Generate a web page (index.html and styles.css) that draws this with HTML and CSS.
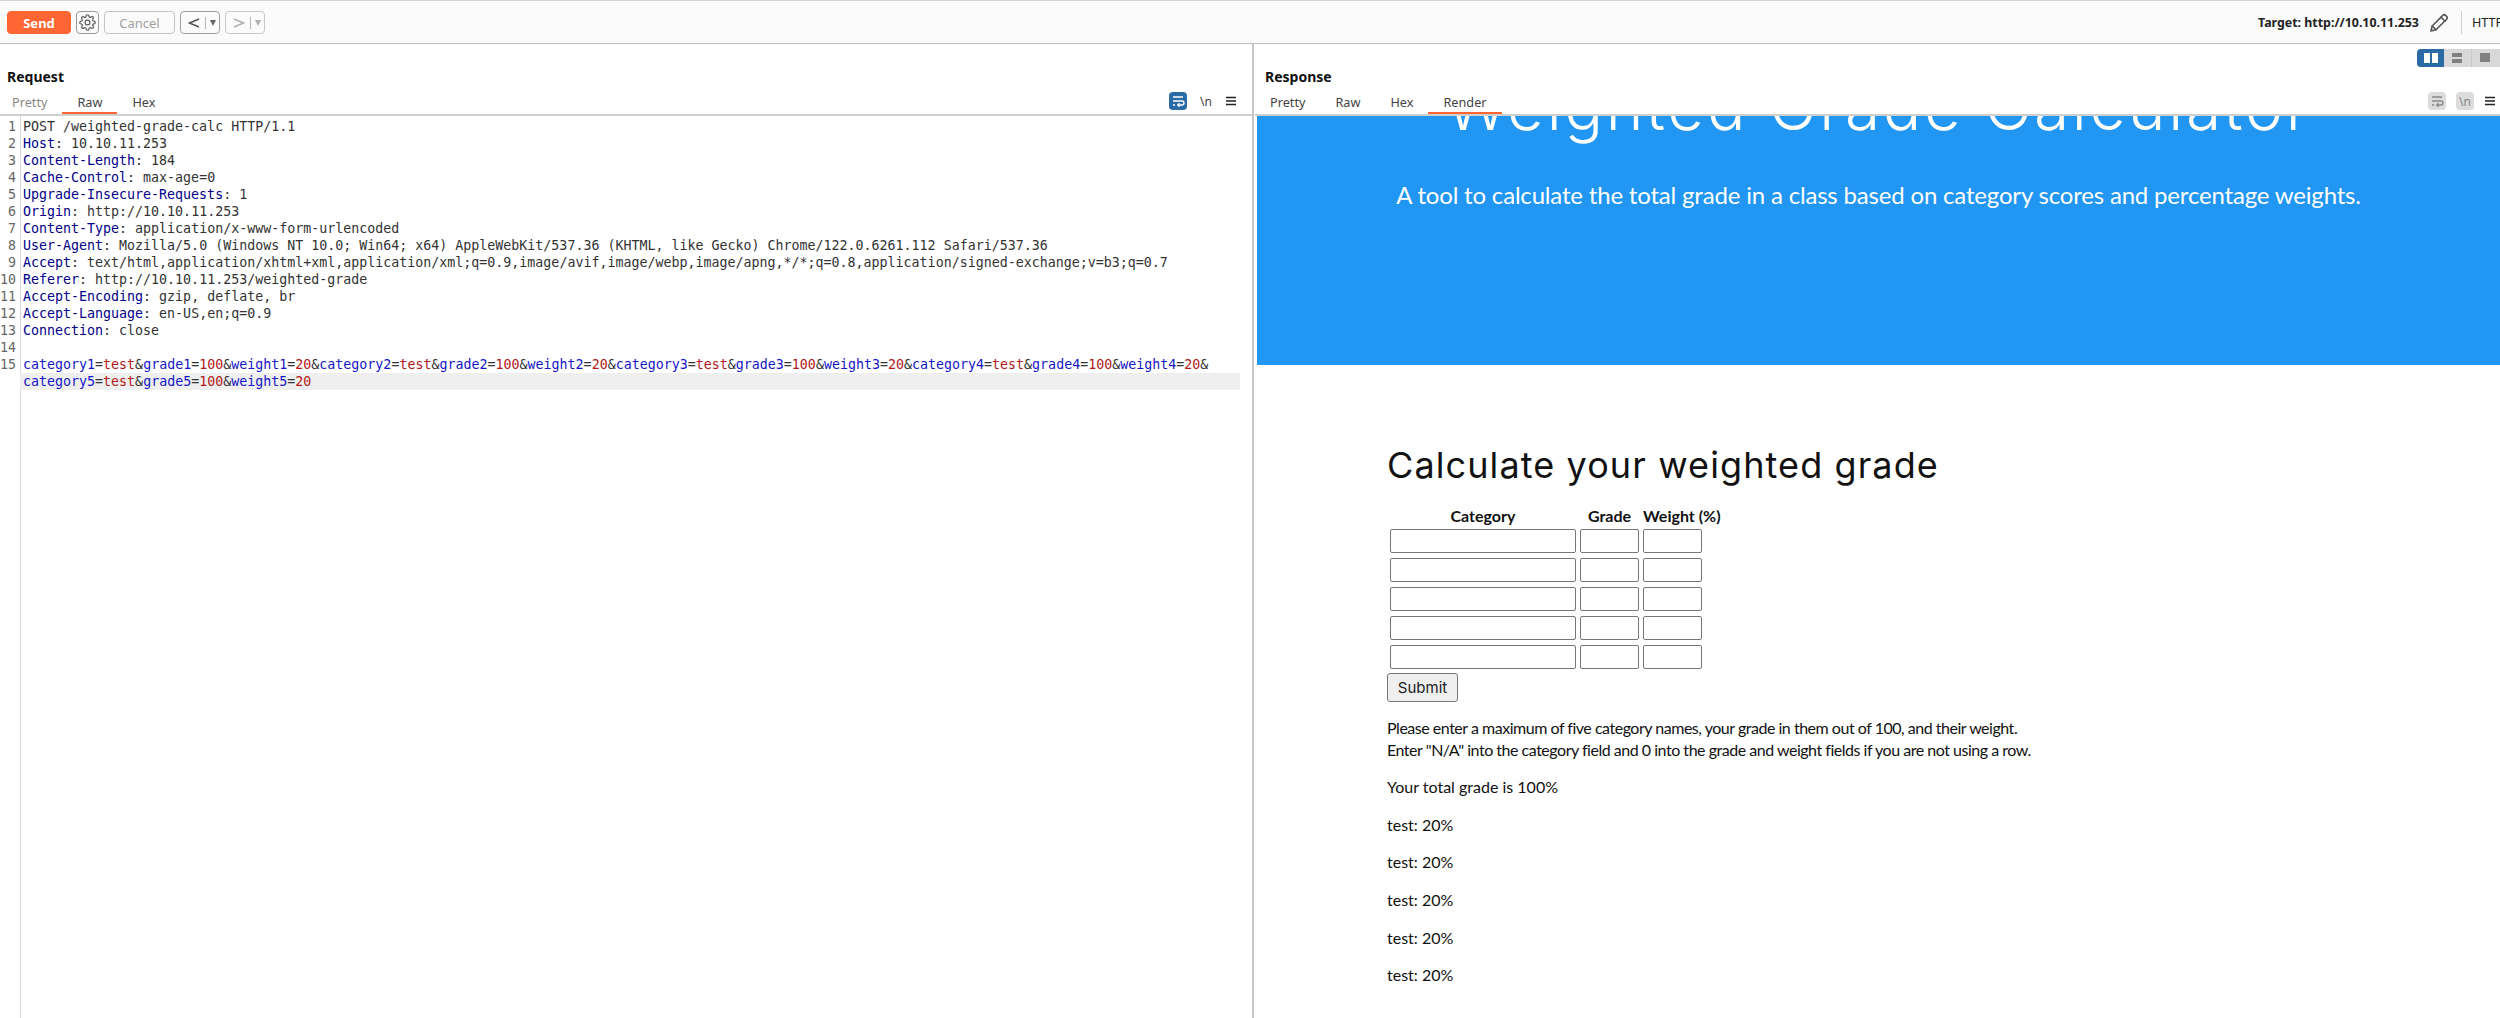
FILE: index.html
```html
<!DOCTYPE html>
<html lang="en">
<head>
<meta charset="utf-8">
<title>Repeater</title>
<link rel="stylesheet" href="styles.css">
</head>
<body>
<header class="toolbar">
  <button class="btn send">Send</button>
  <button class="btn gear"><svg viewBox="0 0 24 24" width="17" height="17" class="line"><circle cx="12" cy="12" r="3.4"/><path d="M19.4 15a1.65 1.65 0 0 0 .33 1.82l.06.06a2 2 0 0 1 0 2.83 2 2 0 0 1-2.83 0l-.06-.06a1.65 1.65 0 0 0-1.82-.33 1.65 1.65 0 0 0-1 1.51V21a2 2 0 0 1-2 2 2 2 0 0 1-2-2v-.09A1.65 1.65 0 0 0 9 19.4a1.65 1.65 0 0 0-1.82.33l-.06.06a2 2 0 0 1-2.83 0 2 2 0 0 1 0-2.83l.06-.06a1.65 1.65 0 0 0 .33-1.82 1.65 1.65 0 0 0-1.51-1H3a2 2 0 0 1-2-2 2 2 0 0 1 2-2h.09A1.65 1.65 0 0 0 4.6 9a1.65 1.65 0 0 0-.33-1.82l-.06-.06a2 2 0 0 1 0-2.83 2 2 0 0 1 2.83 0l.06.06a1.65 1.65 0 0 0 1.82.33H9a1.65 1.65 0 0 0 1-1.51V3a2 2 0 0 1 2-2 2 2 0 0 1 2 2v.09a1.65 1.65 0 0 0 1 1.51 1.65 1.65 0 0 0 1.82-.33l.06-.06a2 2 0 0 1 2.83 0 2 2 0 0 1 0 2.83l-.06.06a1.65 1.65 0 0 0-.33 1.82V9a1.65 1.65 0 0 0 1.51 1H21a2 2 0 0 1 2 2 2 2 0 0 1-2 2h-.09a1.65 1.65 0 0 0-1.51 1z"/></svg></button>
  <button class="btn cancel">Cancel</button>
  <div class="btn nav"><svg viewBox="0 0 12 12" width="12" height="12" class="chev"><path d="M11 2 1.5 6 11 10"/></svg><i class="sep"></i><i class="tri"></i></div>
  <div class="btn nav off"><svg viewBox="0 0 12 12" width="12" height="12" class="chev"><path d="M1 2 10.5 6 1 10"/></svg><i class="sep"></i><i class="tri"></i></div>
  <div class="target">
    <b>Target: http://10.10.11.253</b>
    <svg viewBox="0 0 20 20" width="20" height="20" class="line pencil"><path d="M2 18l1.2-5L13.8 2.4a2 2 0 0 1 2.8 0l1 1a2 2 0 0 1 0 2.8L7 16.8z"/><path d="M12 4.2l4 4M3.2 13l3.8 3.8"/></svg>
    <i class="vsep"></i>
    <span class="proto">HTTP</span>
  </div>
</header>

<main class="panes">
  <section class="pane left">
    <h2 class="title">Request</h2>
    <div class="tabs">
      <span class="tab first dim">Pretty</span>
      <span class="tab on">Raw</span>
      <span class="tab">Hex</span>
      <div class="tools">
        <span class="tool active"><svg viewBox="0 0 18 18" width="18" height="18" class="wrap"><path d="M4 5h10M4 9h9a2 2 0 0 1 0 4H9M4 13h2"/><path d="M10.5 11.2 8.7 13l1.8 1.8"/></svg></span>
        <span class="tool esc">\n</span>
        <svg viewBox="0 0 12 12" width="12" height="12" class="menu"><path d="M1 2.5h10M1 6h10M1 9.5h10"/></svg>
      </div>
    </div>
    <div class="code">
      <div class="row"><span class="ln">1</span><span class="tx">POST /weighted-grade-calc HTTP/1.1</span></div>
      <div class="row"><span class="ln">2</span><span class="tx"><span class="hn">Host</span>: 10.10.11.253</span></div>
      <div class="row"><span class="ln">3</span><span class="tx"><span class="hn">Content-Length</span>: 184</span></div>
      <div class="row"><span class="ln">4</span><span class="tx"><span class="hn">Cache-Control</span>: max-age=0</span></div>
      <div class="row"><span class="ln">5</span><span class="tx"><span class="hn">Upgrade-Insecure-Requests</span>: 1</span></div>
      <div class="row"><span class="ln">6</span><span class="tx"><span class="hn">Origin</span>: http://10.10.11.253</span></div>
      <div class="row"><span class="ln">7</span><span class="tx"><span class="hn">Content-Type</span>: application/x-www-form-urlencoded</span></div>
      <div class="row"><span class="ln">8</span><span class="tx"><span class="hn">User-Agent</span>: Mozilla/5.0 (Windows NT 10.0; Win64; x64) AppleWebKit/537.36 (KHTML, like Gecko) Chrome/122.0.6261.112 Safari/537.36</span></div>
      <div class="row"><span class="ln">9</span><span class="tx"><span class="hn">Accept</span>: text/html,application/xhtml+xml,application/xml;q=0.9,image/avif,image/webp,image/apng,*/*;q=0.8,application/signed-exchange;v=b3;q=0.7</span></div>
      <div class="row"><span class="ln">10</span><span class="tx"><span class="hn">Referer</span>: http://10.10.11.253/weighted-grade</span></div>
      <div class="row"><span class="ln">11</span><span class="tx"><span class="hn">Accept-Encoding</span>: gzip, deflate, br</span></div>
      <div class="row"><span class="ln">12</span><span class="tx"><span class="hn">Accept-Language</span>: en-US,en;q=0.9</span></div>
      <div class="row"><span class="ln">13</span><span class="tx"><span class="hn">Connection</span>: close</span></div>
      <div class="row"><span class="ln">14</span><span class="tx"></span></div>
      <div class="row"><span class="ln">15</span><span class="tx"><span class="pn">category1</span>=<span class="pv">test</span>&amp;<span class="pn">grade1</span>=<span class="pv">100</span>&amp;<span class="pn">weight1</span>=<span class="pv">20</span>&amp;<span class="pn">category2</span>=<span class="pv">test</span>&amp;<span class="pn">grade2</span>=<span class="pv">100</span>&amp;<span class="pn">weight2</span>=<span class="pv">20</span>&amp;<span class="pn">category3</span>=<span class="pv">test</span>&amp;<span class="pn">grade3</span>=<span class="pv">100</span>&amp;<span class="pn">weight3</span>=<span class="pv">20</span>&amp;<span class="pn">category4</span>=<span class="pv">test</span>&amp;<span class="pn">grade4</span>=<span class="pv">100</span>&amp;<span class="pn">weight4</span>=<span class="pv">20</span>&amp;</span></div>
      <div class="row current"><span class="ln"></span><span class="tx"><span class="pn">category5</span>=<span class="pv">test</span>&amp;<span class="pn">grade5</span>=<span class="pv">100</span>&amp;<span class="pn">weight5</span>=<span class="pv">20</span></span></div>
    </div>
  </section>

  <section class="pane right">
    <div class="layout">
      <span class="seg on"><svg viewBox="0 0 14 10" width="14" height="10"><path d="M0 0h6v10H0zM8 0h6v10H8z"/></svg></span>
      <span class="seg"><svg viewBox="0 0 12 10" width="12" height="10"><path d="M0 0h10v4H0zM0 6h10v4H0z"/></svg></span>
      <span class="seg"><svg viewBox="0 0 12 10" width="12" height="10"><path d="M0 0h10v9H0z"/></svg></span>
    </div>
    <h2 class="title">Response</h2>
    <div class="tabs">
      <span class="tab first">Pretty</span>
      <span class="tab">Raw</span>
      <span class="tab">Hex</span>
      <span class="tab on">Render</span>
      <div class="tools">
        <span class="tool off"><svg viewBox="0 0 18 18" width="18" height="18" class="wrap"><path d="M4 5h10M4 9h9a2 2 0 0 1 0 4H9M4 13h2"/><path d="M10.5 11.2 8.7 13l1.8 1.8"/></svg></span>
        <span class="tool off esc">\n</span>
        <svg viewBox="0 0 12 12" width="12" height="12" class="menu"><path d="M1 2.5h10M1 6h10M1 9.5h10"/></svg>
      </div>
    </div>
    <div class="render">
      <div class="page">
        <div class="banner">
          <h1>Weighted Grade Calculator</h1>
          <p class="tagline">A tool to calculate the total grade in a class based on category scores and percentage weights.</p>
        </div>
        <div class="content">
          <h2 class="calc">Calculate your weighted grade</h2>
          <table class="grades">
            <thead><tr><th>Category</th><th>Grade</th><th>Weight (%)</th></tr></thead>
            <tbody>
              <tr><td><input class="cat"></td><td><input class="num"></td><td><input class="num"></td></tr>
              <tr><td><input class="cat"></td><td><input class="num"></td><td><input class="num"></td></tr>
              <tr><td><input class="cat"></td><td><input class="num"></td><td><input class="num"></td></tr>
              <tr><td><input class="cat"></td><td><input class="num"></td><td><input class="num"></td></tr>
              <tr><td><input class="cat"></td><td><input class="num"></td><td><input class="num"></td></tr>
            </tbody>
          </table>
          <button class="submit">Submit</button>
          <p class="instructions">Please enter a maximum of five category names, your grade in them out of 100, and their weight.<br>Enter "N/A" into the category field and 0 into the grade and weight fields if you are not using a row.</p>
          <p>Your total grade is 100%</p>
          <p>test: 20%</p>
          <p>test: 20%</p>
          <p>test: 20%</p>
          <p>test: 20%</p>
          <p>test: 20%</p>
        </div>
      </div>
    </div>
  </section>
</main>
</body>
</html>
```

FILE: styles.css
```css
* { box-sizing: border-box; }
html, body { margin: 0; height: 100%; overflow: hidden; background: #fff; }
body { font-family: "Noto Sans", sans-serif; font-size: 13px; color: #222; display: flex; flex-direction: column; }

.toolbar { height: 44px; flex: none; display: flex; align-items: center; padding: 1px 0 0 7px; gap: 5px; background: #fbfbfb; border-top: 1px solid #cfd6d4; border-bottom: 1px solid #bdbdbd; }
.btn { height: 23px; border: 1px solid #c4c4c4; border-radius: 4px; background: #fbfbfb; font: inherit; padding: 0; display: flex; align-items: center; justify-content: center; color: #a0a0a0; }
.send { width: 64px; background: #ff6633; border-color: #ff6633; color: #fff; font-weight: 700; }
.gear { width: 23px; border-color: #9a9a9a; }
.line { fill: none; stroke: #555; stroke-width: 1.6; stroke-linejoin: round; stroke-linecap: round; }
.cancel { width: 71px; }
.nav { width: 40px; justify-content: flex-start; padding-left: 7px; border-color: #a0a0a0; }
.nav.off { border-color: #c8c8c8; }
.chev { fill: none; stroke: #555; stroke-width: 1.5; }
.off .chev { stroke: #b0b0b0; }
.sep { width: 1px; height: 12px; background: #b8b8b8; margin: 0 4px 0 5px; }
.tri { width: 0; height: 0; border-left: 3px solid transparent; border-right: 3px solid transparent; border-top: 6px solid #666; }
.off .tri { border-top-color: #b0b0b0; }
.target { margin-left: auto; display: flex; align-items: center; color: #222; white-space: nowrap; overflow: hidden; width: 242px; flex: none; }
.target b { font-weight: 700; font-size: 12.4px; }
.pencil { margin-left: 10px; flex: none; }
.vsep { width: 1px; height: 23px; background: #d0d0d0; margin: 0 10px 0 12px; flex: none; }
.proto { flex: none; font-size: 12.6px; }

.panes { flex: 1; display: grid; grid-template-columns: 1252px 1fr; min-height: 0; }
.pane { position: relative; display: flex; flex-direction: column; min-width: 0; min-height: 0; }
.right { border-left: 2px solid #c6c6c6; }
.title { margin: 0; padding: 24px 0 0 7px; height: 48px; font-size: 14px; font-weight: 700; line-height: 18px; color: #111; }
.right .title { padding-left: 11px; }
.tabs { height: 22px; flex: none; display: flex; align-items: flex-start; border-bottom: 2px solid #cfcfcf; color: #444; box-sizing: content-box; }
.right .tabs { margin-left: 1px; }
.tab { height: 22px; padding: 0 15px; line-height: 20px; border-bottom: 2px solid transparent; font-size: 12.7px; }
.tab.first { padding-left: 12px; }
.right .tab.first { padding-left: 15px; }
.tab.dim { color: #888; }
.tab.on { border-bottom-color: #ff6633; }
.tools { margin-left: auto; display: flex; align-items: center; gap: 10px; padding-right: 15px; height: 18px; }
.right .tools { padding-right: 4px; }
.tool { width: 18px; height: 18px; border-radius: 4px; display: flex; align-items: center; justify-content: center; color: #444; font-size: 12px; }
.tool.active { background: #2a6aa5; }
.tool.active .wrap { stroke: #fff; }
.tool.off { background: #dcdcdc; color: #888; }
.wrap { fill: none; stroke: #888; stroke-width: 1.3; }
.menu { fill: none; stroke: #222; stroke-width: 1.5; }
.layout { position: absolute; top: 5px; right: 0; display: flex; height: 18px; border-radius: 4px 0 0 4px; overflow: hidden; background: #d8d8d8; }
.seg { width: 28px; display: flex; align-items: center; justify-content: center; fill: #808080; border-right: 1px solid #c8c8c8; }
.seg.on { background: #2a6aa5; fill: #fff; width: 27px; border: 0; }
.seg:last-child { border: 0; }

.code { flex: 1; font-family: "DejaVu Sans Mono", monospace; font-size: 13.3px; line-height: 17px; color: #333; background: linear-gradient(to right, #fff 20px, #d8d8d8 20px, #d8d8d8 21px, #fff 21px); padding: 2px 12px 0 0; }
.row { display: flex; height: 17px; }
.ln { width: 18px; flex: none; text-align: right; color: #666; margin: 0 6px 0 -2px; }
.tx { flex: 1; margin-left: 1px; white-space: pre; }
.current .tx { background: #efefef; margin-left: -2px; padding-left: 3px; }
.hn { color: #00008b; }
.pn { color: #1515c8; }
.pv { color: #b01818; }

.render { flex: 1; min-height: 0; overflow: hidden; padding-left: 3px; font-family: Lato, sans-serif; color: #111; }
.page { margin-top: -47px; }
.banner { height: 296px; background: #2196f3; color: #fff; text-align: center; padding-top: 0; }
.banner h1 { margin: 0; font-family: Inter, sans-serif; font-weight: 300; font-size: 64px; line-height: 76px; letter-spacing: 2.7px; }
.tagline { margin: 34px 0 0; font-size: 24px; line-height: 32px; letter-spacing: -0.18px; }
.content { padding: 75px 0 0 130px; font-size: 16px; }
.calc { margin: 0 0 13px; font-family: Inter, sans-serif; font-weight: 400; font-size: 36px; line-height: 50px; color: #111; letter-spacing: 1.1px; }
.grades { border-spacing: 2px; }
.grades th { padding: 1px; font-size: 16px; line-height: 19px; font-weight: 700; white-space: nowrap; }
.grades td { padding: 1px 1px 2px; vertical-align: top; }
.grades input { display: block; height: 24px; border: 1px solid #767676; border-radius: 2px; background: #fff; padding: 0; }
.cat { width: 186px; }
.num { width: 59px; }
.submit { display: block; width: 71px; height: 29px; padding: 0; font-family: Inter, sans-serif; font-size: 15px; background: #efefef; border: 1px solid #767676; border-radius: 3px; color: #222; }
.content p { margin: 16px 0; line-height: 21.6px; }
.content .instructions { letter-spacing: -0.48px; margin-top: 15px; }
```
